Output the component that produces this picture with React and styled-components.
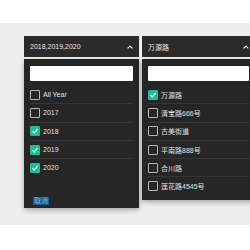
import React from "react";
import styled, { createGlobalStyle } from "styled-components";

const GlobalStyle = createGlobalStyle`
  html, body { margin: 0; padding: 0; background: #ffffff; overflow: hidden; }
  body { font-family: "Liberation Sans", Arial, "Noto Sans CJK SC", sans-serif; }
  * { box-sizing: border-box; }
`;

const Stage = styled.div`
  margin-top: 23px;
  height: 202px;
  background: #eeeeee;
  padding: 13px 0 0 24px;
  display: flex;
  align-items: flex-start;
  gap: 3px;
`;

const Select = styled.div`
  width: ${(p) => p.$width}px;
  flex: none;
  display: flex;
  flex-direction: column;
  gap: 2px;
`;

const Header = styled.div`
  height: 21px;
  background: #2b2b2b;
  display: flex;
  align-items: center;
  justify-content: space-between;
  padding: 0 6px;
  color: #e6e6e6;
  font-size: 7px;
`;

const Dropdown = styled.div`
  background: #262626;
  padding: 7px 6px ${(p) => p.$padBottom}px;
  box-shadow: 0 2px 5px rgba(0, 0, 0, 0.3);
`;

const Search = styled.div`
  height: 15px;
  background: #ffffff;
  border-radius: 1px;
  margin-bottom: 5px;
`;

const Row = styled.div`
  height: 18.3px;
  display: flex;
  align-items: center;
  gap: 3px;
  color: #e2e2e2;
  font-size: 7px;
  border-bottom: 1px solid #363636;
  &:last-child { border-bottom-color: transparent; }
`;

const Box = styled.span`
  width: 10px;
  height: 10px;
  flex: none;
  border-radius: 1px;
  border: 1px solid ${(p) => (p.$checked ? "#1fbf95" : "#b5b5b5")};
  background: ${(p) => (p.$checked ? "#1fbf95" : "transparent")};
  display: flex;
  align-items: center;
  justify-content: center;
`;

const Footer = styled.div`
  padding: 12px 0 0 3px;
  height: 30.5px;
`;

const Cancel = styled.span`
  display: inline-block;
  font-size: 7px;
  line-height: 8px;
  padding: 0 1px;
  color: #6fb6ee;
  background: #1f5a86;
`;

const Caret = () => (
  <svg width="6" height="4" viewBox="0 0 6 4">
    <polyline points="0.6,3.4 3,1 5.4,3.4" fill="none" stroke="#ffffff" strokeWidth="1.1" />
  </svg>
);

const Check = () => (
  <svg width="8" height="8" viewBox="0 0 8 8">
    <polyline points="1.5,4.2 3.3,6 6.6,2" fill="none" stroke="#e8fff6" strokeWidth="1.2" />
  </svg>
);

const Option = ({ label, checked }) => (
  <Row>
    <Box $checked={checked}>{checked && <Check />}</Box>
    <span>{label}</span>
  </Row>
);

const years = [
  { label: "All Year", checked: false },
  { label: "2017", checked: false },
  { label: "2018", checked: true },
  { label: "2019", checked: true },
  { label: "2020", checked: true },
];

const roads = [
  { label: "万源路", checked: true },
  { label: "清宝路666号", checked: false },
  { label: "古美街道", checked: false },
  { label: "平南路888号", checked: false },
  { label: "合川路", checked: false },
  { label: "莲花路4545号", checked: false },
];

export default function App() {
  return (
    <>
      <GlobalStyle />
      <Stage>
        <Select $width={115}>
          <Header>
            <span>2018,2019,2020</span>
            <Caret />
          </Header>
          <Dropdown $padBottom={0}>
            <Search />
            <div>
              {years.map((y) => (
                <Option key={y.label} {...y} />
              ))}
            </div>
            <Footer>
              <Cancel>取消</Cancel>
            </Footer>
          </Dropdown>
        </Select>
        <Select $width={113}>
          <Header>
            <span>万源路</span>
            <Caret />
          </Header>
          <Dropdown $padBottom={4}>
            <Search />
            <div>
              {roads.map((r) => (
                <Option key={r.label} {...r} />
              ))}
            </div>
          </Dropdown>
        </Select>
      </Stage>
    </>
  );
}
